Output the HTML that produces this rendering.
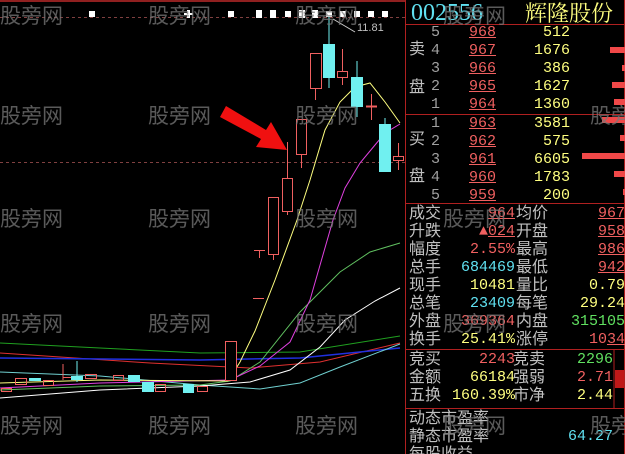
<!DOCTYPE html>
<html><head><meta charset="utf-8"><style>
html,body{margin:0;width:625px;height:454px;background:#000;overflow:hidden;}
body{position:relative;font-family:"Liberation Mono","Noto Sans CJK SC",monospace;}
svg{position:absolute;left:0;top:0}
.t{position:absolute;font-size:15px;line-height:18px;white-space:pre}
.cn{font-family:"Liberation Sans","Noto Sans CJK SC",sans-serif;color:#c0c0c0;font-size:16px}
.r{color:#f06060}.y{color:#ffff80}.c{color:#60e0f0}.g{color:#60e060}.gr{color:#a0a0a0}
.u{text-decoration:underline}
.wm{position:absolute;font-family:"Noto Sans CJK SC",sans-serif;font-size:21px;color:rgba(120,120,120,0.75);white-space:nowrap;z-index:5;pointer-events:none}
</style></head><body>
<svg width="625" height="454">
<line x1="0" y1="1" x2="405" y2="1" stroke="#902020" stroke-width="2"/>
<line x1="0" y1="17.5" x2="405" y2="17.5" stroke="#804040" stroke-dasharray="3,3"/>
<line x1="0" y1="162.5" x2="405" y2="162.5" stroke="#804040" stroke-dasharray="3,3"/>
<g stroke="#b02020" stroke-width="1">
<line x1="405.5" y1="0" x2="405.5" y2="454"/>
<line x1="405" y1="24.5" x2="625" y2="24.5"/>
<line x1="405" y1="114.5" x2="625" y2="114.5"/>
<line x1="405" y1="203.5" x2="625" y2="203.5"/>
<line x1="405" y1="349.5" x2="625" y2="349.5"/>
<line x1="405" y1="408.5" x2="625" y2="408.5"/>
<line x1="624.5" y1="0" x2="624.5" y2="454"/>
<line x1="614" y1="350" x2="614" y2="408"/>
</g>
<rect x="615" y="370" width="9" height="18" fill="#c01818"/>
<g fill="#f04848">
<rect x="610" y="47" width="15" height="6"/><rect x="622" y="65" width="3" height="6"/>
<rect x="612" y="82" width="13" height="6"/><rect x="614" y="99" width="11" height="6"/>
<rect x="602" y="117" width="23" height="6"/><rect x="620" y="135" width="5" height="6"/>
<rect x="582" y="153" width="43" height="6"/><rect x="614" y="171" width="11" height="6"/>
<rect x="623" y="189" width="2" height="6"/>
</g>
<g fill="none" stroke-width="1">
<polyline stroke="#20a020" points="0,343 100,348 200,353 300,352 400,336"/>
<polyline stroke="#e03030" points="0,353 150,363 250,368 320,362 400,343"/>
<polyline stroke="#2030e0" stroke-width="1.5" points="0,358 200,360 300,358 400,348"/>
<polyline stroke="#70d0d0" points="0,372 100,376 200,385 260,389 300,383 340,367 400,344"/>
<polyline stroke="#ffffff" points="0,398 100,390 200,386 250,382 290,370 320,347 345,320 375,301 400,288"/>
<polyline stroke="#60c060" points="0,390 100,386 200,385 230,381 260,362 300,312 340,272 370,252 400,243"/>
<polyline stroke="#e040e0" points="0,388 100,383 230,380 260,366 290,342 310,300 333,220 345,188 360,163 375,145 385,133 400,124"/>
<polyline stroke="#ffff80" points="0,383 100,380 228,381 240,362 255,331 275,280 297,220 310,180 325,130 340,102 355,87 370,83 385,102 400,123"/>
</g>
<g stroke="#f06060" fill="#000">
<rect x="225.5" y="341.5" width="11" height="39"/>
<line x1="253" y1="298.5" x2="264" y2="298.5"/>
<line x1="254" y1="250.5" x2="265" y2="250.5"/><line x1="259.5" y1="250" x2="259.5" y2="258"/>
<line x1="273.5" y1="255" x2="273.5" y2="260"/>
<rect x="268.5" y="197.5" width="10" height="57"/>
<line x1="287.5" y1="142" x2="287.5" y2="215"/>
<rect x="282.5" y="178.5" width="10" height="33"/>
<line x1="301.5" y1="155" x2="301.5" y2="168"/>
<rect x="296.5" y="119.5" width="10" height="35"/>
<line x1="315.5" y1="88" x2="315.5" y2="100"/>
<rect x="310.5" y="53.5" width="11" height="35"/>
<line x1="342.5" y1="49" x2="342.5" y2="85"/>
<rect x="337.5" y="71.5" width="10" height="6"/>
<line x1="371.5" y1="94" x2="371.5" y2="120"/>
<line x1="366" y1="106.5" x2="377" y2="106.5" stroke-width="2"/>
<line x1="398.5" y1="143" x2="398.5" y2="170"/>
<rect x="393.5" y="156.5" width="10" height="4"/>
</g>
<g fill="#70f0f0" stroke="#70f0f0">
<line x1="329" y1="17" x2="329" y2="88"/><rect x="323.5" y="44.5" width="11" height="33"/>
<line x1="357" y1="61" x2="357" y2="117"/><rect x="351.5" y="77.5" width="11" height="29"/>
<line x1="385" y1="118" x2="385" y2="125"/><rect x="379.5" y="124.5" width="11" height="47"/>
</g>
<g stroke="#f06060" fill="none">
<rect x="15.5" y="378.5" width="11" height="6"/><rect x="1.5" y="388.5" width="10" height="3"/>
<rect x="43.5" y="380.5" width="10" height="5"/><line x1="63" y1="377.5" x2="78" y2="377.5"/>
<rect x="85.5" y="374.5" width="11" height="4"/><line x1="63" y1="364" x2="63" y2="380"/>
<rect x="113.5" y="375.5" width="10" height="5"/><rect x="155.5" y="384.5" width="10" height="7"/>
<rect x="197.5" y="386.5" width="10" height="5"/>
</g>
<g fill="#70f0f0">
<rect x="29" y="378" width="12" height="3"/><rect x="128" y="375" width="12" height="7"/>
<rect x="142" y="382" width="12" height="10"/><rect x="183" y="384" width="11" height="9"/>
<rect x="71" y="376" width="12" height="4"/><line x1="77" y1="361" x2="77" y2="382" stroke="#70f0f0"/>
</g>
<g fill="#fff">
<rect x="89" y="11" width="6" height="6"/><rect x="228" y="11" width="6" height="6"/>
<rect x="285" y="11" width="6" height="6"/><rect x="326" y="11" width="6" height="6"/>
<rect x="340" y="11" width="6" height="6"/><rect x="354" y="11" width="6" height="6"/>
<rect x="368" y="11" width="6" height="6"/><rect x="382" y="11" width="6" height="6"/>
<rect x="184" y="13" width="9" height="2"/><rect x="187" y="10" width="3" height="8"/>
<rect x="256" y="10" width="6" height="8"/><rect x="270" y="10" width="6" height="8"/>
<rect x="299" y="10" width="6" height="8"/><rect x="312" y="10" width="6" height="8"/>
</g>
<line x1="333" y1="19" x2="355" y2="32" stroke="#ccc"/>
<text x="357" y="31" fill="#c0c0c0" font-family="Liberation Sans" font-size="11">11.81</text>
<polygon fill="#f01010" points="220,117 226,106 266,130 271,122 287,150 256,147 261,139"/>
</svg>

<div class="t c" style="left:411px;top:2px;font-size:24px;line-height:22px;font-family:'Liberation Serif',serif">002556</div>
<div class="t y" style="left:525px;top:1px;font-size:22px;line-height:24px;font-family:'Noto Serif CJK SC',serif">辉隆股份</div>

<div class="t cn" style="left:409px;top:41px">卖</div>
<div class="t cn" style="left:409px;top:79px">盘</div>
<div class="t cn" style="left:409px;top:131px">买</div>
<div class="t cn" style="left:409px;top:168px">盘</div>

<div class="t gr" style="left:431px;top:24px">5
4
3
2
1</div>
<div class="t gr" style="left:431px;top:115px">1
2
3
4
5</div>
<div class="t r u" style="left:469px;top:24px">968
967
966
965
964</div>
<div class="t r u" style="left:469px;top:115px">963
962
961
960
959</div>
<div class="t y" style="left:528px;top:24px;width:42px;text-align:right">512
1676
386
1627
1360</div>
<div class="t y" style="left:528px;top:115px;width:42px;text-align:right">3581
575
6605
1783
200</div>

<div class="t cn" style="left:409px;top:205px;line-height:18px">成交
升跌
幅度
总手
现手
总笔
外盘
换手</div>
<div class="t" style="left:430px;top:205px;width:85px;text-align:right"><span class="r u">964</span>
<span class="r">▲<u>024</u></span>
<span class="r">2.55%</span>
<span class="c">684469</span>
<span class="y">10481</span>
<span class="c">23409</span>
<span class="r">369364</span>
<span class="y">25.41%</span></div>
<div class="t cn" style="left:516px;top:205px">均价
开盘
最高
最低
量比
每笔
内盘
涨停</div>
<div class="t" style="left:550px;top:205px;width:75px;text-align:right"><span class="r u">967</span>
<span class="r u">958</span>
<span class="r u">986</span>
<span class="r u">942</span>
<span class="y">0.79</span>
<span class="y">29.24</span>
<span class="g">315105</span>
<span class="r">10<u>34</u></span></div>

<div class="t cn" style="left:409px;top:351px">竞买
金额
五换</div>
<div class="t" style="left:420px;top:351px;width:95px;text-align:right"><span class="r">2243</span>
<span class="y">66184</span>
<span class="y">160.39%</span></div>
<div class="t cn" style="left:513px;top:351px">竞卖
强弱
市净</div>
<div class="t" style="left:550px;top:351px;width:63px;text-align:right"><span class="g">2296</span>
<span class="r">2.71</span>
<span class="y">2.44</span></div>

<div class="t cn" style="left:409px;top:410px">动态市盈率
静态市盈率
每股收益</div>
<div class="t c" style="left:560px;top:428px;width:53px;text-align:right">64.27</div>

<div class="wm" style="left:0;top:0">股旁网</div><div class="wm" style="left:148px;top:0">股旁网</div><div class="wm" style="left:295px;top:0">股旁网</div><div class="wm" style="left:443px;top:0">股旁网</div>
<div class="wm" style="left:0;top:100px">股旁网</div><div class="wm" style="left:148px;top:100px">股旁网</div><div class="wm" style="left:295px;top:100px">股旁网</div><div class="wm" style="left:590px;top:100px">股旁网</div>
<div class="wm" style="left:0;top:203px">股旁网</div><div class="wm" style="left:148px;top:203px">股旁网</div><div class="wm" style="left:295px;top:203px">股旁网</div><div class="wm" style="left:443px;top:203px">股旁网</div>
<div class="wm" style="left:0;top:308px">股旁网</div><div class="wm" style="left:148px;top:308px">股旁网</div><div class="wm" style="left:295px;top:308px">股旁网</div><div class="wm" style="left:443px;top:308px">股旁网</div>
<div class="wm" style="left:0;top:410px">股旁网</div><div class="wm" style="left:148px;top:410px">股旁网</div><div class="wm" style="left:295px;top:410px">股旁网</div><div class="wm" style="left:443px;top:410px">股旁网</div><div class="wm" style="left:590px;top:410px">股旁网</div>
</body></html>
